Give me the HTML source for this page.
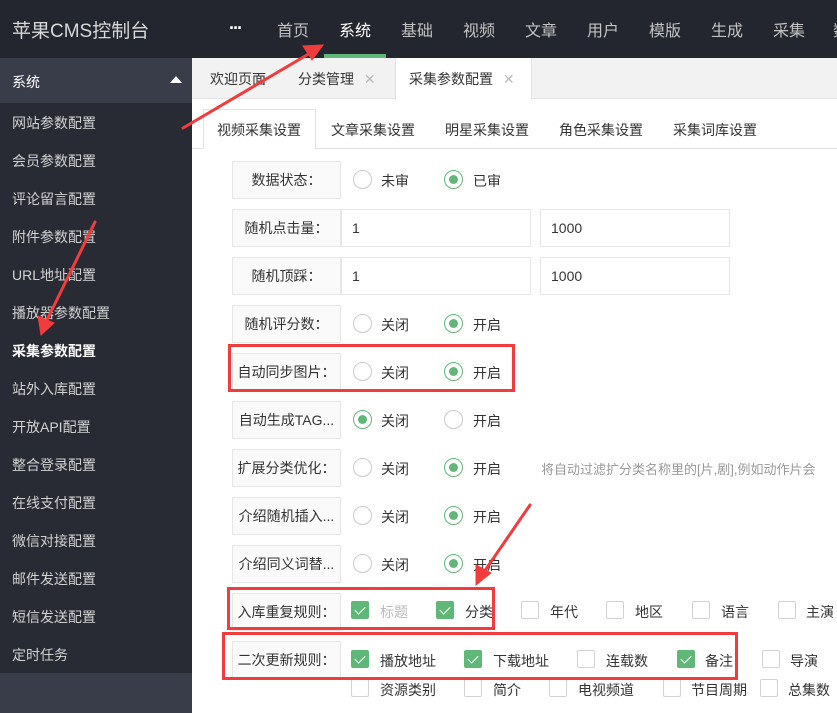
<!DOCTYPE html>
<html><head><meta charset="utf-8">
<style>
*{margin:0;padding:0;box-sizing:border-box}
body{width:837px;height:713px;overflow:hidden;position:relative;background:#fff;font-family:"Liberation Sans","Noto Sans CJK SC",sans-serif;font-size:14px;color:#333}
.a{position:absolute;white-space:nowrap}
#top{left:0;top:0;width:837px;height:58px;background:#23262e}
.nav{top:17px;font-size:16px;color:#c2c2c2}
#side{left:0;top:58px;width:192px;height:655px;background:#282b33}
.si{left:12px;font-size:14px;color:#d2d2d2}
.lb{left:232px;width:109px;height:38px;border:1px solid #e6e6e6;background:#fafafa;text-align:center;line-height:36px;font-size:14px;color:#333}
.in{height:38px;border:1px solid #e6e6e6;background:#fff;line-height:36px;padding-left:10px;font-size:14px;color:#333}
.r{width:19px;height:19px;border:1px solid #c9c9c9;border-radius:50%;background:#fff}
.r.on{border-color:#5fb878}
.r.on::after{content:"";position:absolute;left:4px;top:4px;width:9px;height:9px;border-radius:50%;background:#5fb878}
.t{font-size:14px;color:#333}
.c{width:18px;height:18px;border:1px solid #d2d2d2;border-radius:2px;background:#fff}
.c.on{background:#5fb878;border-color:#5fb878}
.c.on::after{content:"";position:absolute;left:5px;top:2px;width:5px;height:9px;border:solid #fff;border-width:0 1.5px 1.5px 0;transform:rotate(45deg)}
.red{border:3px solid #f03c3c}
</style></head><body>
<div class="a" id="top"></div>
<div class="a" style="left:12px;top:16px;font-size:19px;color:#d8d8d8">苹果CMS控制台</div>
<div class="a" style="left:229px;top:18px;color:#fff;font-weight:bold;font-size:18px;letter-spacing:-2px">···</div>
<div class="a nav" style="left:277px">首页</div>
<div class="a nav" style="left:339px;color:#fff">系统</div>
<div class="a" style="left:324px;top:54px;width:62px;height:4px;background:#5fb878"></div>
<div class="a nav" style="left:401px">基础</div>
<div class="a nav" style="left:463px">视频</div>
<div class="a nav" style="left:525px">文章</div>
<div class="a nav" style="left:587px">用户</div>
<div class="a nav" style="left:649px">模版</div>
<div class="a nav" style="left:711px">生成</div>
<div class="a nav" style="left:773px">采集</div>
<div class="a nav" style="left:833px">数</div>

<div class="a" id="side"></div>
<div class="a" style="left:0;top:58px;width:192px;height:45px;background:#393d49"></div>
<div class="a" style="left:12px;top:72px;color:#fff;font-size:14px">系统</div>
<div class="a" style="left:170px;top:76px;width:0;height:0;border-left:6px solid transparent;border-right:6px solid transparent;border-bottom:7px solid #fff"></div>
<div class="a si" style="top:113px">网站参数配置</div>
<div class="a si" style="top:151px">会员参数配置</div>
<div class="a si" style="top:189px">评论留言配置</div>
<div class="a si" style="top:227px">附件参数配置</div>
<div class="a si" style="top:265px">URL地址配置</div>
<div class="a si" style="top:303px">播放器参数配置</div>
<div class="a si" style="top:341px;color:#fff;font-weight:bold">采集参数配置</div>
<div class="a si" style="top:379px">站外入库配置</div>
<div class="a si" style="top:417px">开放API配置</div>
<div class="a si" style="top:455px">整合登录配置</div>
<div class="a si" style="top:493px">在线支付配置</div>
<div class="a si" style="top:531px">微信对接配置</div>
<div class="a si" style="top:569px">邮件发送配置</div>
<div class="a si" style="top:607px">短信发送配置</div>
<div class="a si" style="top:645px">定时任务</div>
<div class="a" style="left:0;top:673px;width:192px;height:40px;background:#393d49"></div>

<div class="a" style="left:192px;top:58px;width:645px;height:41px;background:#f2f2f2;border-bottom:1px solid #e2e2e2"></div>
<div class="a" style="left:210px;top:69px">欢迎页面</div>
<div class="a" style="left:298px;top:69px">分类管理 <span style="color:#bbb;margin-left:6px">✕</span></div>
<div class="a" style="left:395px;top:58px;width:137px;height:42px;background:#fff;border-left:1px solid #e2e2e2;border-right:1px solid #e2e2e2"></div>
<div class="a" style="left:409px;top:69px">采集参数配置 <span style="color:#bbb;margin-left:6px">✕</span></div>

<div class="a" style="left:192px;top:148px;width:645px;height:1px;background:#e2e2e2"></div>
<div class="a" style="left:203px;top:109px;width:113px;height:40px;background:#fff;border:1px solid #e2e2e2;border-bottom:none"></div>
<div class="a" style="left:217px;top:120px">视频采集设置</div>
<div class="a" style="left:331px;top:120px">文章采集设置</div>
<div class="a" style="left:445px;top:120px">明星采集设置</div>
<div class="a" style="left:559px;top:120px">角色采集设置</div>
<div class="a" style="left:673px;top:120px">采集词库设置</div>

<div class="a lb" style="top:161px">数据状态：</div>
<div class="a r" style="left:353px;top:170px"></div><div class="a t" style="left:381px;top:171px">未审</div>
<div class="a r on" style="left:444px;top:170px"></div><div class="a t" style="left:473px;top:171px">已审</div>

<div class="a lb" style="top:209px">随机点击量：</div>
<div class="a in" style="left:341px;top:209px;width:190px">1</div>
<div class="a in" style="left:540px;top:209px;width:190px">1000</div>

<div class="a lb" style="top:257px">随机顶踩：</div>
<div class="a in" style="left:341px;top:257px;width:190px">1</div>
<div class="a in" style="left:540px;top:257px;width:190px">1000</div>

<div class="a lb" style="top:305px">随机评分数：</div>
<div class="a r" style="left:353px;top:314px"></div><div class="a t" style="left:381px;top:315px">关闭</div>
<div class="a r on" style="left:444px;top:314px"></div><div class="a t" style="left:473px;top:315px">开启</div>

<div class="a lb" style="top:353px">自动同步图片：</div>
<div class="a r" style="left:353px;top:362px"></div><div class="a t" style="left:381px;top:363px">关闭</div>
<div class="a r on" style="left:444px;top:362px"></div><div class="a t" style="left:473px;top:363px">开启</div>

<div class="a lb" style="top:401px">自动生成TAG...</div>
<div class="a r on" style="left:353px;top:410px"></div><div class="a t" style="left:381px;top:411px">关闭</div>
<div class="a r" style="left:444px;top:410px"></div><div class="a t" style="left:473px;top:411px">开启</div>

<div class="a lb" style="top:449px">扩展分类优化：</div>
<div class="a r" style="left:353px;top:458px"></div><div class="a t" style="left:381px;top:459px">关闭</div>
<div class="a r on" style="left:444px;top:458px"></div><div class="a t" style="left:473px;top:459px">开启</div>
<div class="a" style="left:541px;top:459px;color:#999;font-size:13px">将自动过滤扩分类名称里的[片,剧],例如动作片会</div>

<div class="a lb" style="top:497px">介绍随机插入...</div>
<div class="a r" style="left:353px;top:506px"></div><div class="a t" style="left:381px;top:507px">关闭</div>
<div class="a r on" style="left:444px;top:506px"></div><div class="a t" style="left:473px;top:507px">开启</div>

<div class="a lb" style="top:545px">介绍同义词替...</div>
<div class="a r" style="left:353px;top:554px"></div><div class="a t" style="left:381px;top:555px">关闭</div>
<div class="a r on" style="left:444px;top:554px"></div><div class="a t" style="left:473px;top:555px">开启</div>

<div class="a lb" style="top:593px">入库重复规则：</div>
<div class="a c on" style="left:351px;top:601px"></div><div class="a t" style="left:380px;top:602px;color:#bbb">标题</div>
<div class="a c on" style="left:436px;top:601px"></div><div class="a t" style="left:465px;top:602px">分类</div>
<div class="a c" style="left:521px;top:601px"></div><div class="a t" style="left:550px;top:602px">年代</div>
<div class="a c" style="left:606px;top:601px"></div><div class="a t" style="left:635px;top:602px">地区</div>
<div class="a c" style="left:692px;top:601px"></div><div class="a t" style="left:721px;top:602px">语言</div>
<div class="a c" style="left:778px;top:601px"></div><div class="a t" style="left:806px;top:602px">主演</div>

<div class="a lb" style="top:641px">二次更新规则：</div>
<div class="a c on" style="left:351px;top:650px"></div><div class="a t" style="left:380px;top:651px">播放地址</div>
<div class="a c on" style="left:464px;top:650px"></div><div class="a t" style="left:493px;top:651px">下载地址</div>
<div class="a c" style="left:577px;top:650px"></div><div class="a t" style="left:606px;top:651px">连载数</div>
<div class="a c on" style="left:677px;top:650px"></div><div class="a t" style="left:705px;top:651px">备注</div>
<div class="a c" style="left:762px;top:650px"></div><div class="a t" style="left:790px;top:651px">导演</div>
<div class="a c" style="left:351px;top:679px"></div><div class="a t" style="left:380px;top:680px">资源类别</div>
<div class="a c" style="left:464px;top:679px"></div><div class="a t" style="left:493px;top:680px">简介</div>
<div class="a c" style="left:549px;top:679px"></div><div class="a t" style="left:578px;top:680px">电视频道</div>
<div class="a c" style="left:663px;top:679px"></div><div class="a t" style="left:691px;top:680px">节目周期</div>
<div class="a c" style="left:760px;top:679px"></div><div class="a t" style="left:788px;top:680px">总集数</div>

<div class="a red" style="left:228px;top:344px;width:287px;height:48px"></div>
<div class="a red" style="left:227px;top:587px;width:268px;height:43px"></div>
<div class="a red" style="left:222px;top:632px;width:516px;height:48px"></div>

<svg class="a" style="left:0;top:0" width="837" height="713">
<g fill="#f03c3c" stroke="#f03c3c" stroke-width="3" stroke-linecap="round">
<line x1="183" y1="128" x2="312" y2="52"/>
<polygon points="323,45 303,46 312,60" stroke-width="1"/>
<line x1="95" y1="222" x2="46" y2="322"/>
<polygon points="41,335 38,316 54,323" stroke-width="1"/>
<line x1="530" y1="505" x2="484" y2="572"/>
<polygon points="476,585 476,565 491,573" stroke-width="1"/>
</g></svg>
</body></html>
